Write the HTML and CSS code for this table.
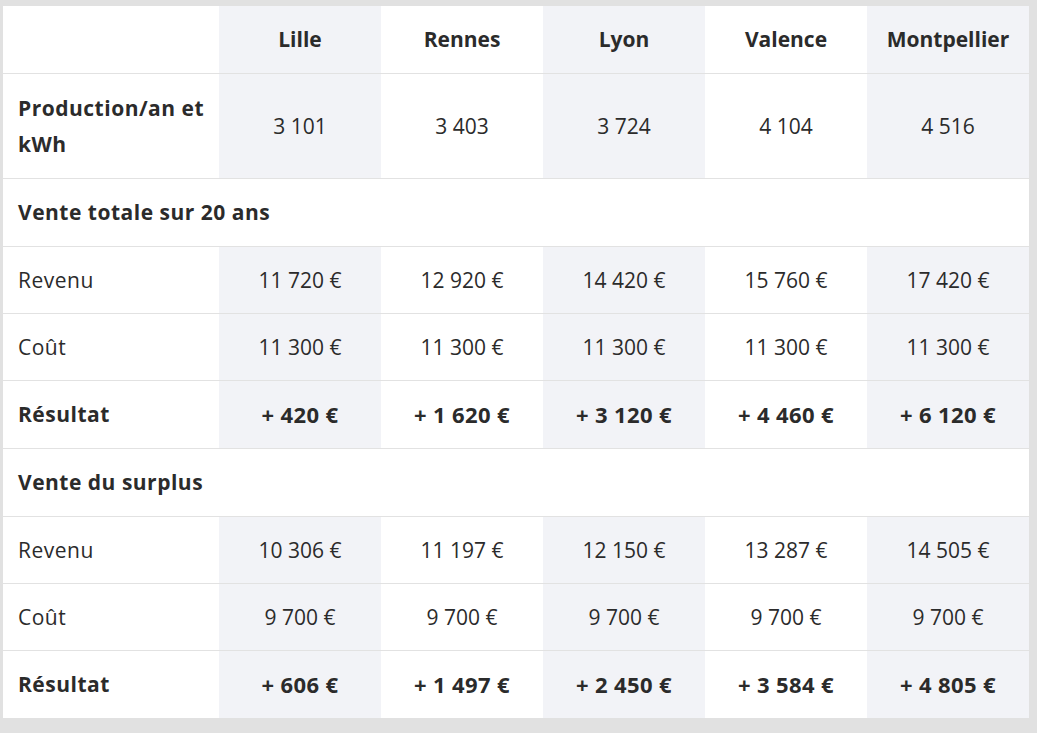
FILE: index.html
```html
<!DOCTYPE html>
<html lang="fr">
<head>
<meta charset="utf-8">
<title>Comparatif</title>
<link rel="stylesheet" href="styles.css">
</head>
<body>
<table class="cmp">
  <colgroup>
    <col class="c-label">
    <col class="c-shade">
    <col class="c-plain">
    <col class="c-shade">
    <col class="c-plain">
    <col class="c-shade">
  </colgroup>
  <thead>
    <tr class="r-head">
      <th></th>
      <th>Lille</th>
      <th>Rennes</th>
      <th>Lyon</th>
      <th>Valence</th>
      <th>Montpellier</th>
    </tr>
  </thead>
  <tbody>
    <tr class="r-prod">
      <th class="lab">Production/an et kWh</th>
      <td>3 101</td><td>3 403</td><td>3 724</td><td>4 104</td><td>4 516</td>
    </tr>
    <tr class="r-sec">
      <th class="lab" colspan="6">Vente totale sur 20 ans</th>
    </tr>
    <tr>
      <td class="lab">Revenu</td>
      <td>11 720 €</td><td>12 920 €</td><td>14 420 €</td><td>15 760 €</td><td>17 420 €</td>
    </tr>
    <tr>
      <td class="lab">Coût</td>
      <td>11 300 €</td><td>11 300 €</td><td>11 300 €</td><td>11 300 €</td><td>11 300 €</td>
    </tr>
    <tr class="r-res">
      <th class="lab">Résultat</th>
      <td>+ 420 €</td><td>+ 1 620 €</td><td>+ 3 120 €</td><td>+ 4 460 €</td><td>+ 6 120 €</td>
    </tr>
    <tr class="r-sec">
      <th class="lab" colspan="6">Vente du surplus</th>
    </tr>
    <tr>
      <td class="lab">Revenu</td>
      <td>10 306 €</td><td>11 197 €</td><td>12 150 €</td><td>13 287 €</td><td>14 505 €</td>
    </tr>
    <tr>
      <td class="lab">Coût</td>
      <td>9 700 €</td><td>9 700 €</td><td>9 700 €</td><td>9 700 €</td><td>9 700 €</td>
    </tr>
    <tr class="r-res">
      <th class="lab">Résultat</th>
      <td>+ 606 €</td><td>+ 1 497 €</td><td>+ 2 450 €</td><td>+ 3 584 €</td><td>+ 4 805 €</td>
    </tr>
  </tbody>
</table>
</body>
</html>
```

FILE: styles.css
```css
html, body {
  margin: 0;
  padding: 0;
  background: #e1e1e1;
}
body {
  padding: 6px 8px 15px 3px;
  font-family: "Open Sans", "Liberation Sans", sans-serif;
  color: #2b2b2b;
}
.cmp {
  width: 1026px;
  border-collapse: collapse;
  table-layout: fixed;
  background: #ffffff;
  font-size: 21px;
}
.c-label { width: 216px; }
.c-shade { width: 162px; background: #f2f3f7; }
.c-plain { width: 162px; }
.cmp th,
.cmp td {
  padding: 0 6px;
  text-align: center;
  vertical-align: middle;
  font-weight: 400;
  line-height: 36px;
  white-space: nowrap;
}
.cmp thead th {
  font-weight: 700;
}
.cmp thead tr {
  height: 67px;
}
.cmp tbody tr {
  border-top: 1px solid #e2e2e2;
  height: 67px;
}
.cmp tbody tr.r-prod { height: 105px; }
.cmp tbody tr.r-sec,
.cmp tbody tr.r-res { height: 68px; }
.cmp .lab {
  text-align: left;
  padding-left: 15px;
  letter-spacing: 0.5px;
}
.cmp .r-prod .lab {
  white-space: normal;
  padding-right: 8px;
}
.cmp th.lab { font-weight: 700; }
.r-sec th {
  background: #ffffff;
}
.r-res td {
  font-weight: 700;
  font-size: 22px;
  letter-spacing: 0.4px;
}
```
